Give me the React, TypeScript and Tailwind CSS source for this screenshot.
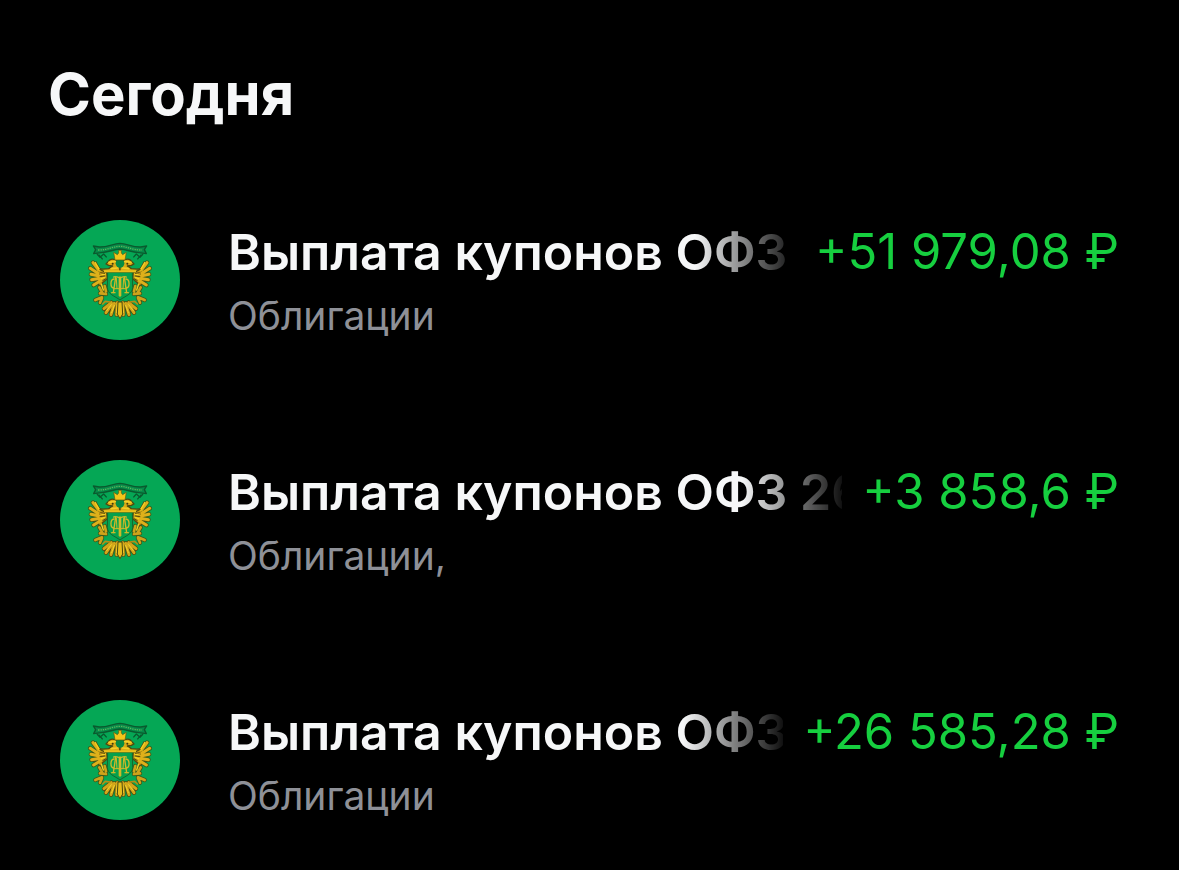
const operations = [
  {
    id: 1,
    title: 'Выплата купонов ОФЗ 26',
    category: 'Облигации',
    amount: '+51 979,08 ₽',
  },
  {
    id: 2,
    title: 'Выплата купонов ОФЗ 26',
    category: 'Облигации,',
    amount: '+3 858,6 ₽',
  },
  {
    id: 3,
    title: 'Выплата купонов ОФЗ 26',
    category: 'Облигации',
    amount: '+26 585,28 ₽',
  },
];

const feathers =
  'M129 158 L146 180 M121 175 L144 190 M123 193 L148 198 M125 209 L150 205 M131 225 L154 211';
const plumes =
  'M148 232 L158 250 M164 228 L168 244 M150 250 L168 252 M136 270 L156 262 M150 278 L156 264';

// Left half of the eagle, the right one is its mirror
function EagleHalf() {
  return (
    <g strokeLinejoin="round" strokeLinecap="round" fill="none">
      {/* wing */}
      <path d={feathers} stroke="#3d5a1a" strokeWidth="14" />
      <path d={plumes} stroke="#3d5a1a" strokeWidth="13" />
      <path
        d="M138 156 L148 176 L170 182 L172 206 L158 218 L150 232 L142 214 L148 196 Z"
        fill="#c89c14"
        stroke="#4d4a10"
        strokeWidth="4"
      />
      <path d={feathers} stroke="#deb01a" strokeWidth="9" />
      <path d={plumes} stroke="#cfa31a" strokeWidth="8" />
      <path
        d="M136 158 L148 179 L168 185 M156 194 L166 192 M154 206 L164 202 M154 222 L160 240"
        stroke="#f5d122"
        strokeWidth="4"
      />
      <path d="M152 188 L164 190 M150 200 L164 198 M158 212 L168 206" stroke="#54490f" strokeWidth="3" />

      {/* head and neck */}
      <path
        d="M168 162 L178 151 C188 143 203 150 204 160 L210 170 L210 185 L164 186 L150 178 L176 176 L188 168 L176 166 Z"
        fill="#d9a916"
        stroke="#4d4a10"
        strokeWidth="4"
      />
      <path d="M177 157 L196 154 M184 176 L202 174" stroke="#f2cf28" strokeWidth="5" />
      <circle cx="188" cy="161" r="3" fill="#3b3a10" />

      {/* tail */}
      <path
        d="M184 278 L162 296 M186 282 L168 308 M193 280 L183 314 M202 278 L200 314"
        stroke="#4b480e"
        strokeWidth="13"
      />
      <path
        d="M184 278 L162 296 M186 282 L168 308 M193 280 L183 314 M202 278 L200 314"
        stroke="#d3a61a"
        strokeWidth="9"
      />
      <path d="M184 284 L170 302 M193 286 L185 308 M202 284 L200 308" stroke="#f0d52c" strokeWidth="3" />
      <path d="M158 282 L166 274 L180 276" stroke="#b58d14" strokeWidth="5" />
    </g>
  );
}

function Emblem() {
  return (
    <svg viewBox="30 30 360 360" className="size-[120px] shrink-0" aria-hidden="true">
      <circle cx="210" cy="210" r="180" fill="#05a755" />
      {/* banner */}
      <g stroke="#0a5a2e" strokeWidth="4" strokeLinejoin="round">
        <path
          d="M130 108 L148 111 C174 112 188 101 210 100 C232 101 246 112 272 111 L290 108 L283 119 L289 131 L266 128 C244 127 230 118 210 117 C190 118 176 127 154 128 L131 131 L137 119 Z"
          fill="#078b49"
        />
        <path
          d="M141 132 L150 142 L161 132 L170 142 M279 132 L270 142 L259 132 L250 142 M146 134 L158 148 M274 134 L262 148"
          fill="none"
        />
      </g>
      <path
        d="M144 120 C176 120 188 109 210 109 C232 109 244 120 276 120"
        fill="none"
        stroke="#5bb45a"
        strokeWidth="4"
        strokeDasharray="4 3"
      />
      <EagleHalf />
      <g transform="translate(420 0) scale(-1 1)">
        <EagleHalf />
      </g>
      <path
        d="M204 276 L216 276 L218 312 L210 326 L202 312 Z"
        fill="#e6bd1b"
        stroke="#4b480e"
        strokeWidth="3"
      />
      {/* crown */}
      <circle cx="210" cy="160" r="13" fill="#078c43" />
      <path
        d="M195 150 L191 127 L202 134 L206 129 L206 121 L214 121 L214 129 L218 134 L229 127 L225 150 Z"
        fill="#f3c51b"
        stroke="#65570e"
        strokeWidth="2"
      />
      {/* shield */}
      <path
        d="M173 187 L247 187 L248 232 C247 254 225 258 210 270 C195 258 173 254 172 232 Z"
        fill="#06a04d"
        stroke="#17652b"
        strokeWidth="3"
      />
      <path d="M162 184 L258 184" stroke="#eac01b" strokeWidth="6" />
      {/* monogram */}
      <g fill="none" stroke="#d0b928" strokeWidth="4" strokeLinecap="round">
        <path d="M197 202 L190 248 M223 202 L230 248 M191 201 C197 196 203 205 210 201 C217 205 223 196 229 201" />
        <path d="M199 205 L201 236 M221 205 L219 236 M192 236 L228 236" strokeWidth="3" />
        <path d="M210 204 L210 256" strokeWidth="8" />
        <path d="M192 207 C180 208 180 233 191 234" />
        <path d="M228 207 C240 208 240 233 229 234" />
        <path d="M185 248 L195 248 M225 248 L235 248" />
      </g>
    </svg>
  );
}

export default function App() {
  return (
    <main className="min-h-screen bg-black pt-15 font-['Inter','Liberation_Sans',sans-serif]">
      <h1 className="px-12 text-[58px] leading-[68px] font-bold text-[#f6f7f8]">Сегодня</h1>

      <ul className="pt-8">
        {operations.map((item) => (
          <li key={item.id} className="flex items-center gap-12 px-15 py-15">
            <Emblem />
            <div className="min-w-0 flex-1">
              <div className="flex items-center gap-5">
                <h2 className="min-w-0 flex-1 overflow-hidden whitespace-nowrap text-[50px] leading-[64px] font-semibold text-[#f6f7f8] [mask-image:linear-gradient(to_left,#0001,black_100px)]">
                  {item.title}
                </h2>
                <span className="shrink-0 whitespace-nowrap text-[49px] leading-[64px] text-[#16cf3f]">
                  {item.amount}
                </span>
              </div>
              <p className="pt-2 text-[39px] leading-[48px] text-[#8e9097]">{item.category}</p>
            </div>
          </li>
        ))}
      </ul>
    </main>
  );
}
